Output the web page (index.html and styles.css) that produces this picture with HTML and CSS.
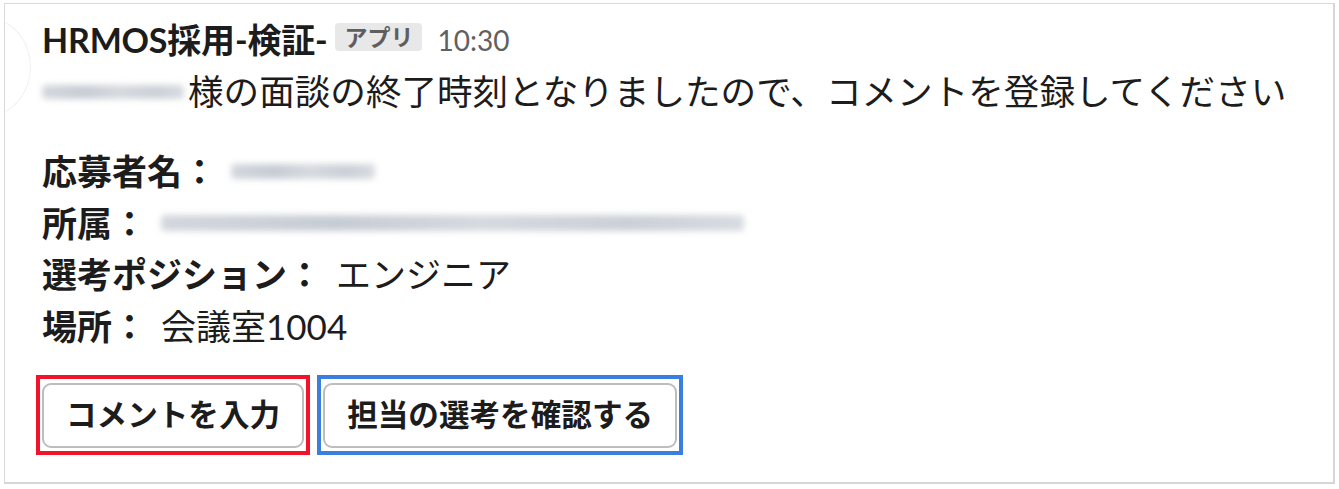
FILE: index.html
```html
<!DOCTYPE html>
<html lang="ja">
<head>
<meta charset="utf-8">
<link rel="stylesheet" href="styles.css">
</head>
<body>
<div class="card">
  <div class="avatar-ghost"></div>
  <div class="header">
    <span class="name">HRMOS採用-検証-</span>
    <span class="badge">アプリ</span>
    <span class="time">10:30</span>
  </div>
  <div class="message"><span class="blur blur-name"></span>様の面談の終了時刻となりましたので、コメントを登録してください</div>
  <div class="fields">
    <div class="field"><b>応募者名：</b><span class="value"><span class="blur blur-applicant"></span></span></div>
    <div class="field"><b>所属：</b><span class="value"><span class="blur blur-org"></span></span></div>
    <div class="field"><b>選考ポジション：</b><span class="value">エンジニア</span></div>
    <div class="field"><b>場所：</b><span class="value">会議室1004</span></div>
  </div>
  <div class="actions">
    <div class="mark mark-red"><button class="btn">コメントを入力</button></div>
    <div class="mark mark-blue"><button class="btn">担当の選考を確認する</button></div>
  </div>
</div>
</body>
</html>
```
FILE: styles.css
```css
html, body {
  margin: 0;
  padding: 0;
  background: #ffffff;
}
body {
  font-family: Lato, "Noto Sans CJK JP", sans-serif;
  color: #1d1c1d;
}
.card {
  position: relative;
  box-sizing: border-box;
  margin: 3px 0 0 4px;
  width: 1331px;
  height: 481px;
  border: 1px solid #d9d9d9;
  border-right: 2px solid #d6d6d6;
  border-bottom: 2px solid #d6d6d6;
  padding: 14px 0 0 37px;
  overflow: hidden;
}
.avatar-ghost {
  position: absolute;
  left: -60px;
  top: 14px;
  width: 84px;
  height: 96px;
  border-radius: 50%;
  border: 1px solid #f1f1f1;
}
.header {
  display: flex;
  align-items: center;
  height: 44px;
}
.name {
  font-size: 34px;
  font-weight: 700;
  line-height: 44px;
  letter-spacing: -0.2px;
}
.badge {
  margin-left: 8px;
  margin-bottom: 6px;
  background: #e8e8e8;
  color: #5e5e5e;
  font-size: 23px;
  font-weight: 700;
  line-height: 28px;
  height: 28px;
  padding: 0 9px;
  border-radius: 4px;
}
.time {
  margin-left: 15px;
  color: #616061;
  font-size: 28px;
  line-height: 44px;
}
.message {
  margin-top: 4px;
  font-size: 35.6px;
  line-height: 52px;
  display: flex;
  align-items: center;
  white-space: nowrap;
}
.blur {
  display: inline-block;
  background: linear-gradient(90deg, #d3d7dd 0%, #c7ccd4 30%, #d6d9de 55%, #cbd0d7 80%, #d8dbe0 100%);
  filter: blur(3px);
  border-radius: 4px;
}
.blur-name {
  width: 142px;
  height: 14px;
  margin-right: 4px;
}
.fields {
  margin-top: 28px;
  font-size: 35px;
  line-height: 51.5px;
}
.field {
  height: 51.5px;
  display: flex;
  align-items: center;
  white-space: nowrap;
}
.field b {
  font-weight: 700;
}
.value {
  display: inline-flex;
  align-items: center;
  margin-left: 14px;
}
.blur-applicant {
  width: 144px;
  height: 15px;
}
.blur-org {
  width: 583px;
  height: 16px;
}
.actions {
  margin-top: 23px;
  margin-left: -6px;
  display: flex;
  gap: 7px;
}
.mark {
  box-sizing: border-box;
  height: 80px;
  padding: 4px 2px 3px 2px;
  border: 4px solid transparent;
}
.mark-red {
  border-color: #f2132a;
}
.mark-blue {
  border-color: #3a7fde;
}
.btn {
  box-sizing: border-box;
  height: 65px;
  padding: 0 22px;
  background: #ffffff;
  border: 2px solid #bdbdbd;
  border-radius: 9px;
  font-family: Lato, "Noto Sans CJK JP", sans-serif;
  font-size: 30.6px;
  font-weight: 700;
  color: #1d1c1d;
  line-height: 1;
}
```
